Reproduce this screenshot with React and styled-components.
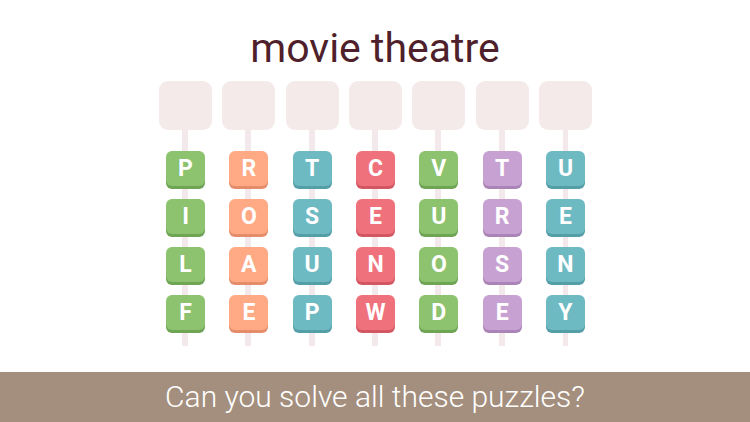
import React from "react";
import styled, { createGlobalStyle } from "styled-components";

const Global = createGlobalStyle`
  html, body { margin: 0; padding: 0; background: #ffffff; }
  body { font-family: Roboto, "Noto Sans", sans-serif; }
`;

const Page = styled.div`
  width: 750px;
  height: 422px;
  display: flex;
  flex-direction: column;
  align-items: center;
  overflow: hidden;
`;

const Title = styled.h1`
  margin: 0;
  padding-top: 25px;
  height: 81px;
  box-sizing: border-box;
  font-family: Roboto, sans-serif;
  font-weight: 400;
  font-size: 41px;
  line-height: 46px;
  color: #4f1f2b;
  text-align: center;
`;

const Board = styled.div`
  display: grid;
  grid-template-columns: repeat(7, 53px);
  column-gap: 10.33px;
  margin-left: 1px;
`;

const Column = styled.div`
  display: flex;
  flex-direction: column;
  align-items: center;
`;

const Slot = styled.div`
  width: 53px;
  height: 49px;
  border-radius: 9px;
  background: #f4eaea;
`;

const Rail = styled.div`
  width: 53px;
  display: flex;
  flex-direction: column;
  align-items: center;
  gap: 10px;
  padding: 21px 0 13px;
  background: linear-gradient(
    to right,
    transparent calc(50% - 3px),
    #f4e9ea calc(50% - 3px),
    #f4e9ea calc(50% + 3px),
    transparent calc(50% + 3px)
  );
`;

const palette = {
  green: ["#8dc26f", "#6fa455"],
  orange: ["#ffa985", "#e58d6a"],
  teal: ["#6ebac3", "#539ea7"],
  pink: ["#ef717c", "#d25762"],
  purple: ["#c8a1d3", "#ab84b7"],
};

const Tile = styled.div`
  width: 39px;
  height: 35px;
  border-radius: 6px;
  background: ${(p) => palette[p.$tone][0]};
  box-shadow: 0 3px 0 ${(p) => palette[p.$tone][1]};
  margin-bottom: 3px;
  display: flex;
  align-items: center;
  justify-content: center;
  color: #ffffff;
  font-family: Roboto, sans-serif;
  font-weight: 700;
  font-size: 23px;
`;

const Footer = styled.div`
  margin-top: auto;
  width: 100%;
  height: 50px;
  background: #a48f7e;
  display: flex;
  align-items: center;
  justify-content: center;
`;

const Tagline = styled.div`
  color: #ffffff;
  font-family: Roboto, sans-serif;
  font-weight: 300;
  font-size: 30px;
  line-height: 36px;
`;

const columns = [
  { tone: "green", letters: "PILF" },
  { tone: "orange", letters: "ROAE" },
  { tone: "teal", letters: "TSUP" },
  { tone: "pink", letters: "CENW" },
  { tone: "green", letters: "VUOD" },
  { tone: "purple", letters: "TRSE" },
  { tone: "teal", letters: "UENY" },
];

export default function App() {
  return (
    <Page>
      <Global />
      <Title>movie theatre</Title>
      <Board>
        {columns.map((c, i) => (
          <Column key={i}>
            <Slot />
            <Rail>
              {c.letters.split("").map((l, j) => (
                <Tile key={j} $tone={c.tone}>
                  {l}
                </Tile>
              ))}
            </Rail>
          </Column>
        ))}
      </Board>
      <Footer>
        <Tagline>Can you solve all these puzzles?</Tagline>
      </Footer>
    </Page>
  );
}
